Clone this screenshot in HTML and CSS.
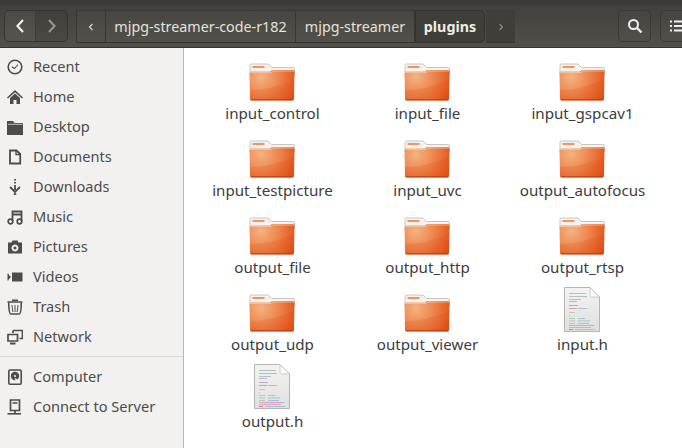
FILE: index.html
```html
<!DOCTYPE html>
<html lang="en">
<head>
<meta charset="utf-8">
<title>plugins</title>
<link rel="stylesheet" href="styles.css">
</head>
<body>
<svg class="defs" aria-hidden="true">
  <defs>
    <radialGradient id="fg" gradientUnits="userSpaceOnUse" cx="12" cy="14" r="40">
      <stop offset="0" stop-color="#f4b283"/>
      <stop offset=".35" stop-color="#ef9059"/>
      <stop offset=".75" stop-color="#e6642b"/>
      <stop offset="1" stop-color="#de4a11"/>
    </radialGradient>
    <linearGradient id="pg" x1="0" y1="0" x2="0" y2="1">
      <stop offset="0" stop-color="#f3f3f2"/>
      <stop offset="1" stop-color="#dfdfdd"/>
    </linearGradient>
    <symbol id="folder" viewBox="0 0 46 38">
      <path d="M1 9V2.500Q1 1 2.500 1H19l3.500 3.500H44Q45.500 4.500 45.500 6V12H1z" fill="#f4f3f1" stroke="#c9c6c2"/>
      <rect x="3.500" y="3" width="12" height="2" fill="#ee9560"/>
      <path d="M.500 10.500Q.500 8.500 2.500 8.500H21l2-1.500H44Q45.500 7 45.500 8.500L45 35.500Q45 37.500 43 37.500H3Q1 37.500 1 35.500z" fill="url(#fg)"/>
      <path d="M1 27Q22 27 45 17V35.500Q45 37.500 43 37.500H3Q1 37.500 1 35.500z" fill="#d8430c" fill-opacity=".16"/>
      <path d="M1 9.500H22.500L24 8H45" fill="none" stroke="#f8c49e" stroke-width=".8"/>
      <path d="M1.500 36.800H44.500" stroke="#b93c0e" stroke-width="1"/>
    </symbol>
    <symbol id="cfile" viewBox="0 0 36 45">
      <path d="M.500.500H26L35.500 10V44.500H.500z" fill="url(#pg)" stroke="#b5b5b2"/>
      <path d="M26 .500V8.500Q26 10 27.500 10H35.500z" fill="#fbfbfa" stroke="#c4c4c1" stroke-width=".8"/>
      <g stroke-width="1" fill="none" opacity=".65">
        <path d="M5 6.500H22M5 9.500H23M5 12.500H17M5 14.500H13" stroke="#8fa8bd"/>
        <path d="M5 18.500H14" stroke="#c774b8"/>
        <path d="M5 21.500H13" stroke="#c774b8"/>
        <path d="M14 21.500H23" stroke="#7fb3cf"/>
        <path d="M5 25.500H11M5 28.500H6" stroke="#94c49a"/>
        <path d="M5 31.500H11M5 34H11M5 36.500H11" stroke="#8ccb8f"/>
        <path d="M14 31.500H21M14 34H26M14 36.500H25" stroke="#7fb3cf"/>
        <path d="M5 38.500H30" stroke="#e07fb0"/>
        <path d="M5 40.500H27" stroke="#d98ac0"/>
        <path d="M5 42.500H9" stroke="#e4454f"/>
        <path d="M11 42.500H31" stroke="#7fb3cf"/>
      </g>
    </symbol>
  </defs>
</svg>

<header class="toolbar">
  <div class="nav">
    <button class="nav-btn nav-back"><svg width="10" height="16" viewBox="0 0 10 16"><path d="M8 2L2.500 8 8 14" fill="none" stroke="#f0efec" stroke-width="2.200"/></svg></button>
    <button class="nav-btn nav-fwd"><svg width="10" height="16" viewBox="0 0 10 16"><path d="M2 2L7.500 8 2 14" fill="none" stroke="#96948e" stroke-width="2.200"/></svg></button>
  </div>
  <nav class="path">
    <span class="seg seg-arrow"><svg width="6" height="8" viewBox="0 0 6 8"><path d="M4.500 1L1.500 4l3 3" fill="none" stroke="#d8d6d0" stroke-width="1.200"/></svg></span>
    <span class="seg seg-one">mjpg-streamer-code-r182</span>
    <span class="seg seg-two">mjpg-streamer</span>
    <span class="seg seg-current">plugins</span>
    <span class="seg seg-next"><svg width="6" height="8" viewBox="0 0 6 8"><path d="M1.500 1l3 3-3 3" fill="none" stroke="#8b8983" stroke-width="1.200"/></svg></span>
  </nav>
  <button class="tool-btn tool-search"><svg width="16" height="16" viewBox="0 0 16 16"><circle cx="6.500" cy="6.500" r="4.500" fill="none" stroke="#f0efec" stroke-width="2"/><path d="M10 10l4.500 4.500" stroke="#f0efec" stroke-width="2.400"/></svg></button>
  <button class="tool-btn tool-view"><svg width="12" height="12" viewBox="0 0 12 12"><path d="M0 1.500h2M4 1.500h8M0 6h2M4 6h8M0 10.500h2M4 10.500h8" stroke="#f0efec" stroke-width="2"/></svg></button>
</header>

<div class="body">
  <aside class="sidebar">
    <ul class="places">
      <li class="place"><svg class="pi" viewBox="0 0 16 16"><circle cx="8" cy="8" r="6.800" fill="none" stroke="#4c4c4c" stroke-width="1.600"/><path d="M4.800 7.800L7.500 9.500 11 5.500" fill="none" stroke="#4c4c4c" stroke-width="1.100"/></svg><span>Recent</span></li>
      <li class="place"><svg class="pi" viewBox="0 0 16 16"><path d="M0 8.500L8 1l8 7.500-1 1L8 3.200 1 9.500zM3 9l5-4.500L13 9v6H9.500v-4h-3v4H3z" fill="#4c4c4c"/></svg><span>Home</span></li>
      <li class="place"><svg class="pi" viewBox="0 0 16 16"><path d="M0 2h6l1.500 2H16v12H0zM2 6v8.500h14V6z" fill="#4c4c4c"/><path d="M2 6h14v10H2z" fill="#4c4c4c"/><path d="M1 5.300h14.500" stroke="#f2f1f0" stroke-width=".7"/></svg><span>Desktop</span></li>
      <li class="place"><svg class="pi" viewBox="0 0 16 16"><path d="M3 1.500h6.500L13.200 5v9.500H3z" fill="none" stroke="#4c4c4c" stroke-width="1.800"/><path d="M9 1.500V5.500H13" fill="none" stroke="#4c4c4c" stroke-width="1.300"/></svg><span>Documents</span></li>
      <li class="place"><svg class="pi" viewBox="0 0 16 16"><path d="M8 0v1.500M8 3v1.500M8 6v5" stroke="#4c4c4c" stroke-width="1.800"/><path d="M3 8l5 5 5-5" fill="none" stroke="#4c4c4c" stroke-width="1.800"/><path d="M6.800 15h2.400" stroke="#4c4c4c" stroke-width="1.800"/></svg><span>Downloads</span></li>
      <li class="place"><svg class="pi" viewBox="0 0 16 16"><path d="M5.500 12V2.500H14.500V12M5.500 5.500H14.500" fill="none" stroke="#4c4c4c" stroke-width="1.800"/><circle cx="3.500" cy="12.500" r="2.300" fill="none" stroke="#4c4c4c" stroke-width="1.700"/><circle cx="12.500" cy="12.500" r="2.300" fill="none" stroke="#4c4c4c" stroke-width="1.700"/></svg><span>Music</span></li>
      <li class="place"><svg class="pi" viewBox="0 0 16 16"><path fill-rule="evenodd" d="M1 3.500h3.500L5.500 1.500h5l1 2H15v11H1zM8 5.500a3.500 3.500 0 1 0 .01 0zM8 7.500a1.500 1.500 0 1 1-.01 0z" fill="#4c4c4c"/></svg><span>Pictures</span></li>
      <li class="place"><svg class="pi" viewBox="0 0 16 16"><path d="M5 3.500h10.500v9H5zM1 5l3 3-3 3z" fill="#4c4c4c"/><path d="M1 4.500v7" stroke="#4c4c4c"/></svg><span>Videos</span></li>
      <li class="place"><svg class="pi" viewBox="0 0 16 16"><path d="M0.500 3h15M5 1.200h6" stroke="#4c4c4c" stroke-width="1.600"/><path d="M1.700 3.500Q1.800 15 4 15H12Q14.200 15 14.300 3.500" fill="none" stroke="#4c4c4c" stroke-width="1.600"/><path d="M5 6q.3 4 1 7M8 6v7M11 6q-.3 4-1 7" fill="none" stroke="#4c4c4c"/></svg><span>Trash</span></li>
      <li class="place"><svg class="pi" viewBox="0 0 16 16"><path d="M1 5.500h9.500v6.500H1z" fill="none" stroke="#4c4c4c" stroke-width="1.700"/><path d="M3 13.500h5.500v2H3z" fill="#4c4c4c"/><path d="M6 1.500h9.500v8H12.500M6 1.500V4" fill="none" stroke="#4c4c4c" stroke-width="1.700"/></svg><span>Network</span></li>
    </ul>
    <hr class="sep">
    <ul class="places">
      <li class="place"><svg class="pi" viewBox="0 0 16 16"><rect x="1.800" y="1" width="12.400" height="14.200" rx="1.200" fill="none" stroke="#4c4c4c" stroke-width="1.600"/><circle cx="8" cy="7" r="4.200" fill="#4c4c4c"/><circle cx="8" cy="7" r="1.100" fill="#f2f1f0"/><path d="M8 9.500l3.500 3" stroke="#f2f1f0" stroke-width="1.400"/></svg><span>Computer</span></li>
      <li class="place"><svg class="pi" viewBox="0 0 16 16"><path d="M3.500 1h9v10.500h-9z" fill="none" stroke="#4c4c4c" stroke-width="1.700"/><path d="M5.500 4h5" stroke="#4c4c4c" stroke-width="1.500"/><path d="M8 12v2" stroke="#4c4c4c" stroke-width="1.700"/><path d="M0.500 14.800h13.500" stroke="#4c4c4c" stroke-width="1.600"/></svg><span>Connect to Server</span></li>
    </ul>
  </aside>

  <main class="files">
    <div class="item"><svg class="folder"><use href="#folder"/></svg><span>input_control</span></div>
    <div class="item"><svg class="folder"><use href="#folder"/></svg><span>input_file</span></div>
    <div class="item"><svg class="folder"><use href="#folder"/></svg><span>input_gspcav1</span></div>
    <div class="item"><svg class="folder"><use href="#folder"/></svg><span>input_testpicture</span></div>
    <div class="item"><svg class="folder"><use href="#folder"/></svg><span>input_uvc</span></div>
    <div class="item"><svg class="folder"><use href="#folder"/></svg><span>output_autofocus</span></div>
    <div class="item"><svg class="folder"><use href="#folder"/></svg><span>output_file</span></div>
    <div class="item"><svg class="folder"><use href="#folder"/></svg><span>output_http</span></div>
    <div class="item"><svg class="folder"><use href="#folder"/></svg><span>output_rtsp</span></div>
    <div class="item"><svg class="folder"><use href="#folder"/></svg><span>output_udp</span></div>
    <div class="item"><svg class="folder"><use href="#folder"/></svg><span>output_viewer</span></div>
    <div class="item item-file"><svg class="file"><use href="#cfile"/></svg><span>input.h</span></div>
    <div class="item item-file"><svg class="file"><use href="#cfile"/></svg><span>output.h</span></div>
  </main>
</div>
</body>
</html>
```

FILE: styles.css
```css
* { box-sizing: border-box; }
html, body { margin: 0; padding: 0; }
body {
  width: 682px;
  height: 448px;
  overflow: hidden;
  background: #fff;
  font-family: "Noto Sans", "Open Sans", sans-serif;
  font-size: 14.6px;
  display: flex;
  flex-direction: column;
}
.defs { display: block; width: 0; height: 0; }

.toolbar {
  flex: none;
  height: 48px;
  display: flex;
  align-items: flex-start;
  padding: 10px 0 0 4px;
  overflow: hidden;
  background: linear-gradient(#3c3b37 0, #3c3b37 5px, #42413c 6px, #514f49 46px);
  border-bottom: 1px solid #34332f;
}
button { font: inherit; padding: 0; margin: 0; color: inherit; }
.nav {
  flex: none;
  display: flex;
  width: 64px;
  height: 32px;
  border: 1px solid #35342f;
  border-radius: 5px;
  overflow: hidden;
}
.nav-btn {
  display: flex;
  align-items: center;
  justify-content: center;
  border: 0;
  height: 100%;
}
.nav-back { width: 31px; background: rgba(255, 255, 255, .04); border-right: 1px solid #3d3c37; }
.nav-fwd { flex: 1; background: rgba(0, 0, 0, .05); }
.path {
  flex: none;
  display: flex;
  height: 33px;
  margin-left: 8px;
  color: #e4e2dc;
  font-size: 14.3px;
  line-height: 18px;
  border-left: 1px solid #383732;
}
.seg {
  display: flex;
  align-items: center;
  justify-content: center;
  border-top: 1px solid #3b3a35;
  border-bottom: 1px solid #35342f;
  border-right: 1px solid #383732;
  background: rgba(255, 255, 255, .02);
}
.seg-arrow { width: 29px; }
.seg-one { width: 190px; }
.seg-two { width: 119px; }
.seg-current {
  width: 70px;
  font-weight: 700;
  background: #3f3e39;
  color: #eeece6;
  border: 1px solid #34332e;
  border-radius: 0 5px 5px 0;
}
.seg-next {
  width: 29px;
  margin-left: 1px;
  background: #3f3e39;
  border-right: 0;
}
.tool-btn {
  flex: none;
  display: flex;
  align-items: center;
  justify-content: center;
  height: 32px;
  border: 1px solid #3a3934;
  border-radius: 5px;
  background: rgba(255, 255, 255, .01);
}
.tool-search { width: 33px; margin-left: 103px; }
.tool-view { width: 40px; margin-left: 9px; justify-content: flex-start; padding-left: 9px; }

.body { flex: 1; min-height: 0; display: flex; }
.sidebar {
  flex: none;
  width: 184px;
  background: #f2f1f0;
  border-right: 1px solid #b8b6b3;
  color: #4c4c4c;
  padding-top: 4px;
}
.places { list-style: none; margin: 0; padding: 0; }
.place {
  display: flex;
  align-items: center;
  gap: 10px;
  height: 30px;
  padding-left: 7px;
  line-height: 18px;
}
.place span { padding-bottom: 2px; }
.pi { flex: none; width: 16px; height: 16px; }
.sep {
  margin: 4px 0 5px;
  border: 0;
  border-top: 1px solid #dcdad8;
}
.files {
  flex: 1;
  display: grid;
  grid-template-columns: repeat(3, 155px);
  grid-auto-rows: 77px;
  padding: 15px 0 0 11px;
  color: #3c3c3c;
  font-size: 15.15px;
  align-content: start;
}
.item {
  display: flex;
  flex-direction: column;
  align-items: center;
  line-height: 20px;
  white-space: nowrap;
}
.folder { display: block; width: 46px; height: 38px; margin: 0 2px 2px 0; }
.file { display: block; width: 36px; height: 45px; margin: -7px 2px 2px 0; }
```
